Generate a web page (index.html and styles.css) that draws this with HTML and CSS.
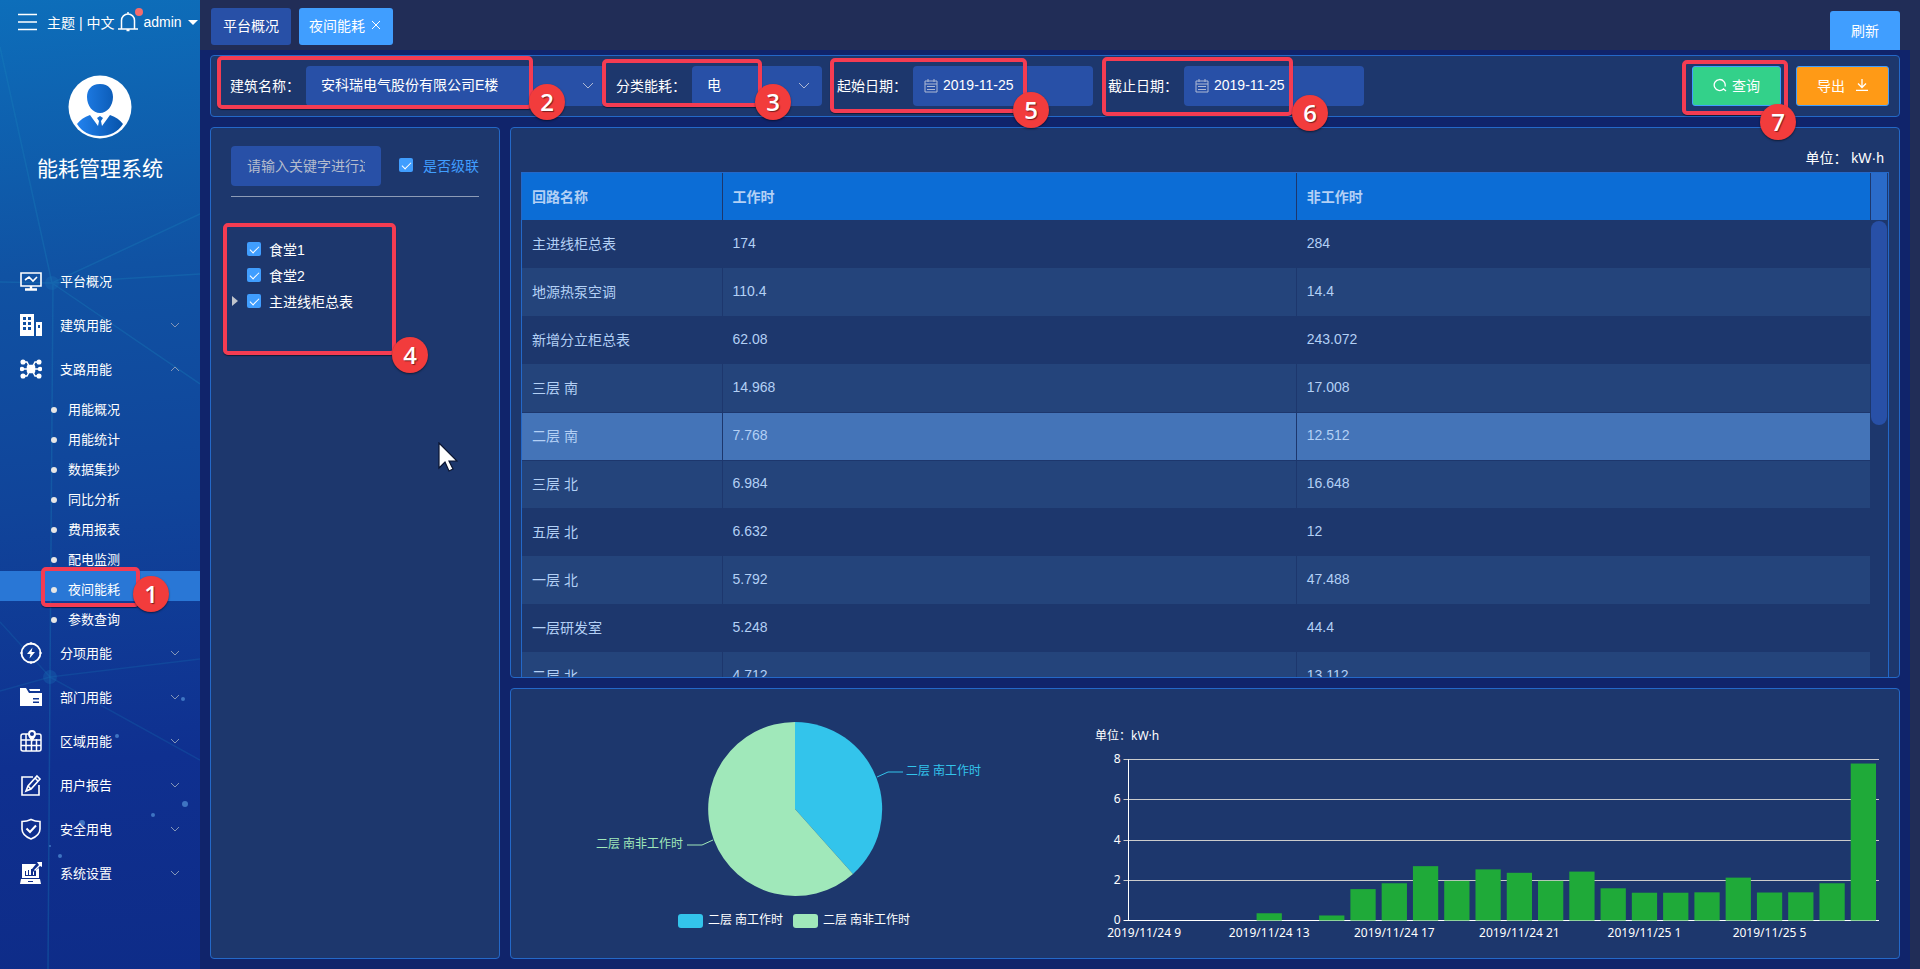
FILE: index.html
```html
<!DOCTYPE html>
<html lang="zh-CN">
<head>
    <meta charset="UTF-8">
    <meta name="viewport" content="width=device-width, initial-scale=1.0">
    <title>能耗管理系统</title>
    <link rel="stylesheet" href="styles.css">
</head>
<body>
<div class="app">
    <aside class="sidebar">
        <svg class="sidebar-bg" viewBox="0 0 200 969" preserveAspectRatio="none" aria-hidden="true">
            <g stroke="#1b86bd" stroke-opacity=".3" stroke-width="1.5" fill="none">
                <path d="M0 47 52 283 200 214M0 282 52 283 200 274M52 283 200 384M53 283 50 677 48 969"/>
                <path d="M0 622 50 677 200 659M0 691 50 677 200 760" stroke-opacity=".2"/>
            </g>
            <g fill="#1b74b8" fill-opacity=".3"><circle cx="52" cy="283" r="7"/><circle cx="50" cy="677" r="7"/></g>
            <g fill="#4b86d0" fill-opacity=".8">
                <circle cx="183" cy="699" r="2"/><circle cx="117" cy="736" r="2"/><circle cx="185" cy="804" r="3"/>
                <circle cx="153" cy="815" r="2"/><circle cx="82" cy="823" r="3"/><circle cx="50" cy="846" r="1"/><circle cx="60" cy="856" r="2"/>
            </g>
        </svg>
        <div class="side-top">
            <button class="icon-btn" aria-label="折叠菜单">
                <svg width="20" height="18" viewBox="0 0 20 18" stroke="#fff" stroke-width="1.3"><path d="M0 1.5h19M0 9h19M0 16.5h19"/></svg>
            </button>
            <span class="links"><a href="#">主题</a> | <a href="#">中文</a></span>
            <button class="icon-btn bell" aria-label="通知">
                <svg width="20" height="20" viewBox="0 0 20 20" fill="none" stroke="#fff" stroke-width="1.5"><path d="M0 17h20M3.5 17V8.500a6.500 6.500 0 0 1 13 0V17M10 2V0M8.500 18.500h3"/></svg>
                <span class="dot"></span>
            </button>
            <button class="user">admin<span class="caret"></span></button>
        </div>
        <svg class="avatar" width="64" height="64" viewBox="0 0 64 64" aria-hidden="true">
            <defs><linearGradient id="av"><stop offset="0" stop-color="#2282ef"/><stop offset="1" stop-color="#0653aa"/></linearGradient></defs>
            <circle cx="32" cy="32" r="31.500" fill="#fff"/>
            <path fill="url(#av)" d="M32 9c9 0 13 6 13 13 0 9-6 16-13 16s-13-7-13-16c0-7 4-13 13-13zM22 40l8 11 1-5-2-3 3-2 3 2-2 3 1 5 8-11c6 2 10 5 13 9-5 8-13 12-23 12S14 57 9 49c3-4 7-7 13-9z"/>
        </svg>
        <h1 class="sys-name">能耗管理系统</h1>

        <nav class="menu">
            <a class="menu-item" href="#">
                <svg viewBox="0 0 22 22" fill="none" stroke="#fff" stroke-width="1.600"><path d="M1 3h20v13H1zM5 10l4-3 4 4 4-4"/><path d="M11 16v3M5 19.500h12" stroke-width="2.400"/></svg>
                <span>平台概况</span>
            </a>
            <a class="menu-item" href="#">
                <svg viewBox="0 0 22 22" fill="#fff"><path fill-rule="evenodd" d="M0 0h14v22H0zM3 3v3h3V3zM8 3v3h3V3zM3 8v3h3V8zM8 8v3h3V8zM3 13v3h3v-3zM8 13v3h3v-3zM16 8h6v14h-6zM18 11v3h2v-3z"/></svg>
                <span>建筑用能</span>
                <svg class="arrow" viewBox="0 0 10 6"><path d="M1 1l4 4 4-4"/></svg>
            </a>
            <a class="menu-item" href="#">
                <svg viewBox="0 0 22 22" fill="#fff" stroke="#fff" stroke-width="1.500"><rect x="7.500" y="7.500" width="7" height="7" rx="1"/><path fill="none" d="M2 11h18M3 4h4l2 4M19 4h-4l-2 4M3 18h4l2-4M19 18h-4l-2-4"/><circle cx="3" cy="4" r="1.800"/><circle cx="19" cy="4" r="1.800"/><circle cx="2" cy="11" r="1.500"/><circle cx="20" cy="11" r="1.500"/><circle cx="3" cy="18" r="1.800"/><circle cx="19" cy="18" r="1.800"/></svg>
                <span>支路用能</span>
                <svg class="arrow" viewBox="0 0 10 6"><path d="M1 5l4-4 4 4"/></svg>
            </a>
            <ul class="submenu">
                <li><a href="#">用能概况</a></li>
                <li><a href="#">用能统计</a></li>
                <li><a href="#">数据集抄</a></li>
                <li><a href="#">同比分析</a></li>
                <li><a href="#">费用报表</a></li>
                <li><a href="#">配电监测</a></li>
                <li class="active"><a href="#">夜间能耗</a><div class="mark mark-1"><b>1</b></div></li>
                <li><a href="#">参数查询</a></li>
            </ul>
            <a class="menu-item" href="#">
                <svg viewBox="0 0 22 22" fill="none" stroke="#fff" stroke-width="1.800"><circle cx="11" cy="11" r="9.500"/><path d="M11 0v3M11 19v3M0 11h3M19 11h3" stroke-width="1.200"/><path fill="#fff" stroke="none" d="M12.500 5.500L7 12h3.500l-1 4.500L15 10h-3.500z"/></svg>
                <span>分项用能</span>
                <svg class="arrow" viewBox="0 0 10 6"><path d="M1 1l4 4 4-4"/></svg>
            </a>
            <a class="menu-item" href="#">
                <svg viewBox="0 0 22 22" fill="#fff"><path fill-rule="evenodd" d="M0 2h6l3 5h13v13H0zM13 12v1.500h6V12zM13 15.500V17h6v-1.500z"/><path d="M9 3h11v2H10z"/></svg>
                <span>部门用能</span>
                <svg class="arrow" viewBox="0 0 10 6"><path d="M1 1l4 4 4-4"/></svg>
            </a>
            <a class="menu-item" href="#">
                <svg viewBox="0 0 22 22" fill="none" stroke="#fff" stroke-width="1.500"><path d="M8 4H3a2 2 0 0 0-2 2v13a2 2 0 0 0 2 2h16a2 2 0 0 0 2-2V6a2 2 0 0 0-2-2h-3M1 10h20M1 15.500h20M6 4v17M11.500 11v10M16.500 9v12"/><path fill="#fff" fill-rule="evenodd" stroke="none" d="M12 0a4 4 0 0 1 4 4c0 3-2 4-4 8-2-4-4-5-4-8a4 4 0 0 1 4-4zm0 2a2 2 0 1 0 0 4 2 2 0 0 0 0-4z"/></svg>
                <span>区域用能</span>
                <svg class="arrow" viewBox="0 0 10 6"><path d="M1 1l4 4 4-4"/></svg>
            </a>
            <a class="menu-item" href="#">
                <svg viewBox="0 0 22 22" fill="none" stroke="#fff" stroke-width="1.600"><path d="M13 3H2v18h17V11"/><path d="M17 2l3 3-9 10-5 2 2-5zM15 4l3 3M8 12l3 3"/></svg>
                <span>用户报告</span>
                <svg class="arrow" viewBox="0 0 10 6"><path d="M1 1l4 4 4-4"/></svg>
            </a>
            <a class="menu-item" href="#">
                <svg viewBox="0 0 22 22" fill="none" stroke="#fff" stroke-width="1.600"><path d="M11 1.500c3 1.500 6 2 9 2V11c0 5-4 8-9 10-5-2-9-5-9-10V3.500c3 0 6-.5 9-2z"/><path d="M6.500 10.500l3.500 3.500 6-6.500" stroke-width="2"/></svg>
                <span>安全用电</span>
                <svg class="arrow" viewBox="0 0 10 6"><path d="M1 1l4 4 4-4"/></svg>
            </a>
            <a class="menu-item" href="#">
                <svg viewBox="0 0 22 22" fill="#fff"><path fill-rule="evenodd" d="M2 2h14l-4 5h-1v6H9V8H8v5H6V9H5v5h11V8l3-2v10H2zM1 17h19l1 5H0zM8 19v1h5v-1zM13 10l1-1v4h-1z"/><path d="M17 0h5v5l-2-1-5 5-1-1 5-5z"/></svg>
                <span>系统设置</span>
                <svg class="arrow" viewBox="0 0 10 6"><path d="M1 1l4 4 4-4"/></svg>
            </a>
        </nav>
    </aside>

    <div class="main">
        <header class="topbar">
            <a class="tab" href="#">平台概况</a>
            <a class="tab tab-active" href="#">夜间能耗 <svg width="10" height="10" viewBox="0 0 10 10" stroke="#fff"><path d="M1 1l8 8M9 1L1 9"/></svg></a>
            <button class="refresh">刷新</button>
        </header>

        <div class="page">
            <form class="panel filter">
                <div class="field">
                    <label for="building">建筑名称：</label>
                    <div class="control building">
                        <select id="building"><option>安科瑞电气股份有限公司E楼</option></select>
                        <svg class="chev" viewBox="0 0 12 8"><path d="M1 1l5 5 5-5"/></svg>
                    </div>
                    <div class="mark mark-2"><b>2</b></div>
                </div>
                <div class="field">
                    <label for="energy">分类能耗：</label>
                    <div class="control energy">
                        <select id="energy"><option>电</option></select>
                        <svg class="chev" viewBox="0 0 12 8"><path d="M1 1l5 5 5-5"/></svg>
                    </div>
                    <div class="mark mark-3"><b>3</b></div>
                </div>
                <div class="field">
                    <label for="start">起始日期：</label>
                    <div class="control date">
                        <svg class="cal" viewBox="0 0 14 14"><path d="M1 2h12v11H1zM1 5h12M4 0v3M10 0v3M3 7.500h8M3 10.500h8"/></svg>
                        <input type="text" id="start" value="2019-11-25">
                    </div>
                    <div class="mark mark-5"><b>5</b></div>
                </div>
                <div class="field">
                    <label for="end">截止日期：</label>
                    <div class="control date">
                        <svg class="cal" viewBox="0 0 14 14"><path d="M1 2h12v11H1zM1 5h12M4 0v3M10 0v3M3 7.500h8M3 10.500h8"/></svg>
                        <input type="text" id="end" value="2019-11-25">
                    </div>
                    <div class="mark mark-6"><b>6</b></div>
                </div>
                <div class="actions">
                    <button type="button" class="btn btn-query"><svg width="14" height="14" viewBox="0 0 14 14"><path d="M10.500 11A5.500 5.500 0 1 1 12 8.500M10 10.500l3 2.500"/></svg>查询</button>
                    <button type="button" class="btn btn-export">导出<svg width="12" height="12" viewBox="0 0 12 12"><path d="M6 0v8M2 4.500L6 8.500l4-4M0 11.300h12"/></svg></button>
                    <div class="mark mark-7"><b>7</b></div>
                </div>
            </form>

            <div class="content">
                <section class="panel tree-panel">
                    <div class="tree-head">
                        <input class="search" type="text" placeholder="请输入关键字进行过滤" aria-label="关键字">
                        <label class="cascade"><input type="checkbox" checked>是否级联</label>
                    </div>
                    <ul class="tree">
                        <li><label><input type="checkbox" checked>食堂1</label></li>
                        <li><label><input type="checkbox" checked>食堂2</label></li>
                        <li class="parent"><label><input type="checkbox" checked>主进线柜总表</label></li>
                    </ul>
                    <div class="mark mark-4"><b>4</b></div>
                    <svg class="cursor" width="20" height="30" viewBox="0 0 20 30" aria-hidden="true"><path d="M1 1v25l6-6 4 9 4-2-4-8h8z" fill="#fff" stroke="#0a1430" stroke-width="1.200"/></svg>
                </section>

                <div class="right">
                    <section class="panel table-panel">
                        <p class="unit">单位： kW·h</p>
                        <div class="table-wrap">
                            <table>
                                <thead>
                                <tr><th class="col-name">回路名称</th><th>工作时</th><th>非工作时</th></tr>
                                </thead>
                                <tbody>
                                <tr><td>主进线柜总表</td><td>174</td><td>284</td></tr>
                                <tr><td>地源热泵空调</td><td>110.4</td><td>14.4</td></tr>
                                <tr><td>新增分立柜总表</td><td>62.08</td><td>243.072</td></tr>
                                <tr><td>三层 南</td><td>14.968</td><td>17.008</td></tr>
                                <tr class="current"><td>二层 南</td><td>7.768</td><td>12.512</td></tr>
                                <tr><td>三层 北</td><td>6.984</td><td>16.648</td></tr>
                                <tr><td>五层 北</td><td>6.632</td><td>12</td></tr>
                                <tr><td>一层 北</td><td>5.792</td><td>47.488</td></tr>
                                <tr><td>一层研发室</td><td>5.248</td><td>44.4</td></tr>
                                <tr><td>二层 北</td><td>4.712</td><td>13.112</td></tr>
                                </tbody>
                            </table>
                            <div class="gutter"><div class="gutter-head"></div><div class="thumb"></div></div>
                        </div>
                    </section>

                    <section class="panel charts">
                        <svg viewBox="0 0 568 269" role="img" aria-label="工作时占比">
                            <path d="M284 120V33A87 87 0 0 1 342 185z" fill="#33c4eb"/>
                            <path d="M284 120L342 185A87 87 0 1 1 284 33z" fill="#a0e8ba"/>
                            <path d="M366 88l11-5h15" fill="none" stroke="#33c4eb"/>
                            <path d="M202 151l-11 5h-15" fill="none" stroke="#a0e8ba"/>
                            <text x="395" y="86" fill="#33c4eb">二层 南工作时</text>
                            <text x="172" y="159" text-anchor="end" fill="#a0e8ba">二层 南非工作时</text>
                            <rect x="167" y="225" width="25" height="14" rx="3" fill="#33c4eb"/>
                            <text x="197" y="235" fill="#fff">二层 南工作时</text>
                            <rect x="282" y="225" width="25" height="14" rx="3" fill="#a0e8ba"/>
                            <text x="312" y="235" fill="#fff">二层 南非工作时</text>
                        </svg>
                        <svg class="bar-chart" id="bars" viewBox="0 0 820 269" role="img" aria-label="逐时能耗">
                            <text x="16" y="51">单位：kW·h</text>
                        </svg>
                    </section>
                </div>
            </div>
        </div>
    </div>
</div>

<script>
    const values = [0, 0, 0, 0, 0.36, 0, 0.25, 1.56, 1.85, 2.7, 1.97, 2.54, 2.37, 1.97, 2.43, 1.6, 1.38, 1.38, 1.4, 2.13, 1.39, 1.4, 1.85, 7.8];
    const labels = ['2019/11/24 9', '2019/11/24 13', '2019/11/24 17', '2019/11/24 21', '2019/11/25 1', '2019/11/25 5'];
    const left = 49.5, right = 800, bottom = 231.5, unit = 20.125;
    const step = (right - left) / values.length;
    let out = '';

    // grid lines and y axis
    for (let v = 0; v <= 8; v += 2) {
        const y = Math.floor(bottom - v * unit) + 0.5;
        out += `<path d="M${left - 5} ${y}H${right}" stroke="${v ? '#ccc' : '#fff'}"/>`;
        out += `<text x="${left - 8}" y="${y + 3}" text-anchor="end">${v}</text>`;
    }
    out += `<path d="M${left} ${bottom - 8 * unit}V${bottom}" stroke="#fff"/>`;

    values.forEach((v, i) => {
        if (v) out += `<rect x="${left + i * step + 3}" y="${bottom - v * unit}" width="${step - 6}" height="${v * unit}" fill="#1faa39"/>`;
    });
    labels.forEach((t, i) => {
        out += `<text x="${left + (i * 4 + 0.5) * step}" y="248" text-anchor="middle">${t}</text>`;
    });
    document.getElementById('bars').innerHTML += out;
</script>
</body>
</html>
```
FILE: styles.css
```css
* {
    box-sizing: border-box;
}
body {
    margin: 0;
    font-family: "Liberation Sans", Arial, "Noto Sans CJK SC", sans-serif;
    font-size: 14px;
    color: #fff;
    background: #10246b;
}
a {
    color: inherit;
    text-decoration: none;
}
button, input, select {
    font: inherit;
    color: inherit;
}
ul {
    list-style: none;
    margin: 0;
    padding: 0;
}
.app {
    display: flex;
    height: 100vh;
    min-height: 900px;
}

/* sidebar */
.sidebar {
    position: relative;
    flex: 0 0 200px;
    min-width: 0;
    background: linear-gradient(175deg, #0d6eba 0%, #1052a3 28%, #10449a 52%, #0f3090 78%, #0e2c88 100%);
}
.sidebar-bg {
    position: absolute;
    width: 100%;
    height: 100%;
}
.side-top, .avatar, .sys-name, .menu {
    position: relative;
}
.side-top {
    display: flex;
    align-items: center;
    height: 44px;
    padding-left: 18px;
    white-space: nowrap;
}
.icon-btn, .user {
    display: flex;
    align-items: center;
    padding: 0;
    border: 0;
    background: none;
}
.links {
    margin: 0 4px 0 9px;
}
.bell {
    position: relative;
}
.bell .dot {
    position: absolute;
    top: -4px;
    right: -5px;
    width: 8px;
    height: 8px;
    border-radius: 50%;
    background: #f56c6c;
}
.user {
    margin-left: 5px;
}
.caret {
    margin-left: 6px;
    border: 5px solid transparent;
    border-top-color: #fff;
    border-bottom: 0;
}
.avatar {
    display: block;
    margin: 31px auto 15px;
}
.sys-name {
    margin: 0;
    font-size: 21px;
    font-weight: normal;
    line-height: 30px;
    text-align: center;
}
.menu {
    margin-top: 75px;
    font-size: 13px;
}
.menu-item {
    display: flex;
    align-items: center;
    gap: 18px;
    height: 44px;
    padding: 0 20px;
}
.menu-item > svg {
    width: 22px;
    height: 22px;
}
.menu-item span {
    padding-bottom: 1px;
}
.menu-item .arrow {
    width: 10px;
    height: 6px;
    margin-left: auto;
    fill: none;
    stroke: #8396b8;
}
.submenu li {
    position: relative;
    height: 30px;
    padding: 5px 0 0 51px;
    line-height: 28px;
}
.submenu a {
    display: flex;
    align-items: center;
    gap: 11px;
}
.submenu a::before {
    content: "";
    width: 6px;
    height: 6px;
    border-radius: 50%;
    background: #e6e6e6;
}
.submenu .active {
    background: #2977d6;
}

/* top tabs */
.main {
    flex: 1;
    min-width: 0;
    display: flex;
    flex-direction: column;
}
.topbar {
    display: flex;
    gap: 8px;
    flex: 0 0 50px;
    padding: 8px 20px 0 11px;
    background: #212d57;
}
.tab {
    display: flex;
    align-items: center;
    gap: 6px;
    height: 37px;
    padding: 0 12px 4px;
    border-radius: 3px;
    background: #2850a7;
}
.tab-active {
    padding-left: 10px;
    background: #409eff;
}
.refresh {
    align-self: flex-end;
    width: 70px;
    height: 39px;
    margin-left: auto;
    padding-bottom: 3px;
    border: 0;
    border-radius: 3px 3px 0 0;
    background: #409eff;
}

.page {
    flex: 1;
    min-height: 0;
    display: flex;
    flex-direction: column;
    gap: 10px;
    padding: 5px 10px 10px;
    border-right: 10px solid #212d57;
}
.panel {
    position: relative;
    border: 1px solid #2468c8;
    border-radius: 4px;
    background: #1d376d;
}

/* filter bar */
.filter {
    display: flex;
    align-items: center;
    height: 62px;
    padding: 0 10px 0 19px;
}
.field {
    position: relative;
    display: flex;
    align-items: center;
    margin-right: 10px;
}
.field + .field {
    margin-right: 15px;
}
.field label {
    width: 76px;
    padding-bottom: 2px;
    white-space: nowrap;
}
.control {
    position: relative;
    height: 40px;
    border-radius: 4px;
    background: #2850a7;
}
.building {
    width: 300px;
}
.energy {
    width: 130px;
}
.date {
    width: 180px;
}
.control select, .control input {
    width: 100%;
    height: 100%;
    padding: 0 15px 2px;
    border: 0;
    appearance: none;
    background: none;
}
.control.date input {
    padding-left: 30px;
}
.chev {
    position: absolute;
    top: 16px;
    right: 12px;
    width: 12px;
    height: 8px;
    fill: none;
    stroke: #aeb9d4;
}
.cal {
    position: absolute;
    top: 13px;
    left: 11px;
    width: 14px;
    height: 14px;
    fill: none;
    stroke: #aeb9d4;
}
.actions {
    position: relative;
    display: flex;
    gap: 15px;
    margin-left: auto;
}
.btn {
    display: flex;
    align-items: center;
    justify-content: center;
    height: 40px;
    padding: 0 20px 2px;
    border: 1px solid #409eff;
    border-radius: 3px;
}
.btn svg {
    fill: none;
    stroke: #fff;
    stroke-width: 1.3;
}
.btn-query {
    gap: 5px;
    background: #33d18a;
}
.btn-export {
    gap: 11px;
    background: #ff9a16;
}

/* tree */
.content {
    flex: 1;
    min-height: 0;
    display: flex;
    gap: 10px;
}
.tree-panel {
    flex: 0 0 290px;
    padding: 18px 20px;
}
.tree-head {
    display: flex;
    align-items: center;
    justify-content: space-between;
    padding-bottom: 10px;
    border-bottom: 1px solid #8d9bb6;
}
.search {
    width: 150px;
    height: 40px;
    padding: 0 16px;
    border: 0;
    border-radius: 4px;
    background: #2850a7;
}
.search::placeholder {
    color: #b4bccd;
}
.cascade, .tree label {
    display: flex;
    align-items: center;
    gap: 8px;
}
.cascade {
    gap: 10px;
    color: #409eff;
    padding-bottom: 2px;
}
input[type="checkbox"] {
    position: relative;
    width: 14px;
    height: 14px;
    margin: 0;
    border-radius: 2px;
    appearance: none;
    background: #409eff;
}
input[type="checkbox"]:checked::after {
    content: "";
    position: absolute;
    left: 5px;
    top: 2px;
    width: 4px;
    height: 8px;
    border: solid #fff;
    border-width: 0 1px 1px 0;
    transform: rotate(45deg);
}
.tree {
    margin-top: 39px;
}
.tree li {
    display: flex;
    align-items: center;
    height: 26px;
    padding-left: 16px;
}
.tree .parent {
    padding-left: 1px;
}
.parent::before {
    content: "";
    margin-right: 9px;
    border: 5px solid transparent;
    border-left: 6px solid #c0c4cc;
    border-right: 0;
}
.cursor {
    position: absolute;
    top: 314px;
    left: 227px;
}

/* table */
.right {
    flex: 1;
    min-width: 0;
    display: grid;
    grid-template-rows: 61fr 30fr;
    gap: 10px;
}
.table-panel {
    min-height: 0;
    padding: 0 10px;
    overflow: hidden;
}
.unit {
    margin: 0;
    padding: 18px 5px 0 0;
    height: 44px;
    line-height: 24px;
    text-align: right;
}
.table-wrap {
    display: flex;
    border: 1px solid #2468c8;
}
table {
    flex: 1;
    width: 100%;
    table-layout: fixed;
    border-collapse: collapse;
    color: #b3d0f5;
}
th, td {
    height: 48px;
    padding: 0 10px 2px;
    text-align: left;
    border-right: 1px solid #1d376d;
}
th {
    height: 47px;
    background: #0c6dd6;
}
.col-name {
    width: 200px;
}
tbody tr:nth-child(even) {
    background: #24447b;
}
tbody tr.current {
    background: #4474b8;
}
tbody tr.current + tr {
    background: #24447b;
}
tbody tr.current, tbody tr.current + tr {
    border-top: 1px solid #1d376d;
}
.gutter {
    flex: 0 0 17px;
    padding-right: 1px;
}
.gutter-head {
    height: 47px;
    margin-bottom: 1px;
    background: #2a6bc9;
}
.thumb {
    height: 204px;
    border-radius: 8px;
    background: #2850a7;
}

/* charts */
.charts {
    min-height: 0;
    display: grid;
    grid-template-columns: 568fr 820fr;
}
.charts svg {
    width: 100%;
    height: 100%;
    min-height: 0;
    font-family: "Noto Sans", "Noto Sans CJK SC", sans-serif;
    font-size: 12px;
}
.bar-chart {
    fill: #fff;
}

/* numbered marks over the controls */
.mark {
    position: absolute;
    z-index: 10;
    border: 4px solid #f43c52;
    border-radius: 5px;
    box-shadow: 0 1px 1px rgba(0, 0, 0, 0.5);
    pointer-events: none;
}
.mark b {
    position: absolute;
    width: 36px;
    height: 36px;
    border-radius: 50%;
    background: #f23c3c;
    box-shadow: 0 1px 2px rgba(0, 0, 0, 0.5);
    font: 600 24px/36px "Open Sans", sans-serif;
    text-align: center;
    text-shadow: 1px 1px 1px rgba(0, 0, 0, 0.5);
}
.mark-1 {
    left: 41px;
    top: -4px;
    width: 99px;
    height: 40px;
}
.mark-1 b {
    right: -33px;
    bottom: -9px;
}
.mark-2 {
    left: -13px;
    top: -10px;
    width: 316px;
    height: 53px;
}
.mark-2 b {
    right: -36px;
    bottom: -15px;
}
.mark-3 {
    left: -14px;
    top: -7px;
    width: 160px;
    height: 48px;
}
.mark-3 b {
    right: -33px;
    bottom: -17px;
}
.mark-4 {
    left: 12px;
    top: 95px;
    width: 173px;
    height: 132px;
}
.mark-4 b {
    right: -36px;
    bottom: -22px;
}
.mark-5 {
    left: -7px;
    top: -8px;
    width: 197px;
    height: 55px;
}
.mark-5 b {
    right: -26px;
    bottom: -19px;
}
.mark-6 {
    left: -6px;
    top: -9px;
    width: 191px;
    height: 59px;
}
.mark-6 b {
    right: -39px;
    bottom: -19px;
}
.mark-7 {
    left: -10px;
    top: -6px;
    width: 106px;
    height: 55px;
}
.mark-7 b {
    right: -12px;
    bottom: -29px;
}
```
